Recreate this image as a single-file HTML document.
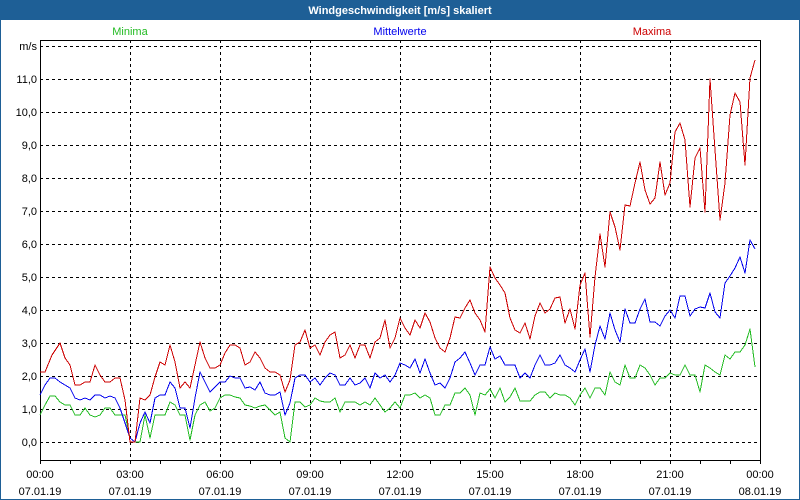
<!DOCTYPE html>
<html><head><meta charset="utf-8"><style>
html,body{margin:0;padding:0;background:#fff;width:800px;height:500px;overflow:hidden}
svg{display:block}
text{font-family:"Liberation Sans","DejaVu Sans",sans-serif;font-size:11px}
</style></head><body>
<svg width="800" height="500" viewBox="0 0 800 500" xmlns="http://www.w3.org/2000/svg">
<rect x="0" y="0" width="800" height="500" fill="#fff"/>
<rect x="0.5" y="0.5" width="799" height="499" fill="none" stroke="#1e5f96" stroke-width="1"/>
<rect x="0" y="0" width="800" height="20" fill="#1e5f96"/>
<text x="400" y="14" fill="#fff" text-anchor="middle" font-weight="bold">Windgeschwindigkeit [m/s] skaliert</text>
<text x="130" y="35" fill="#22bb22" text-anchor="middle">Minima</text>
<text x="400" y="35" fill="#0000ee" text-anchor="middle">Mittelwerte</text>
<text x="652" y="35" fill="#cc0000" text-anchor="middle">Maxima</text>
<g stroke="#000" stroke-width="1" stroke-dasharray="3,3" fill="none">
<path d="M40 46.5H760M40 79.5H760M40 112.5H760M40 145.5H760M40 178.5H760M40 211.5H760M40 244.5H760M40 277.5H760M40 310.5H760M40 343.5H760M40 376.5H760M40 409.5H760M40 442.5H760"/>
<path d="M130.5 40V461M220.5 40V461M310.5 40V461M400.5 40V461M490.5 40V461M580.5 40V461M670.5 40V461"/>
</g>
<rect x="40.5" y="40.5" width="720" height="420" fill="none" stroke="#000"/>
<g stroke="#000"><path d="M70.5 461v3M100.5 461v3M130.5 461v3M160.5 461v3M190.5 461v3M220.5 461v3M250.5 461v3M280.5 461v3M310.5 461v3M340.5 461v3M370.5 461v3M400.5 461v3M430.5 461v3M460.5 461v3M490.5 461v3M520.5 461v3M550.5 461v3M580.5 461v3M610.5 461v3M640.5 461v3M670.5 461v3M700.5 461v3M730.5 461v3M760.5 461v3M40.5 461v3"/></g>
<g fill="#000" text-anchor="end">
<text x="37" y="50">m/s</text><text x="37" y="83">11,0</text><text x="37" y="116">10,0</text><text x="37" y="149">9,0</text><text x="37" y="182">8,0</text><text x="37" y="215">7,0</text><text x="37" y="248">6,0</text><text x="37" y="281">5,0</text><text x="37" y="314">4,0</text><text x="37" y="347">3,0</text><text x="37" y="380">2,0</text><text x="37" y="413">1,0</text><text x="37" y="446">0,0</text>
</g>
<g fill="#000" text-anchor="middle">
<text x="40" y="478">00:00</text><text x="40" y="495">07.01.19</text>
<text x="130" y="478">03:00</text><text x="130" y="495">07.01.19</text>
<text x="220" y="478">06:00</text><text x="220" y="495">07.01.19</text>
<text x="310" y="478">09:00</text><text x="310" y="495">07.01.19</text>
<text x="400" y="478">12:00</text><text x="400" y="495">07.01.19</text>
<text x="490" y="478">15:00</text><text x="490" y="495">07.01.19</text>
<text x="580" y="478">18:00</text><text x="580" y="495">07.01.19</text>
<text x="670" y="478">21:00</text><text x="670" y="495">07.01.19</text>
<text x="760" y="478">00:00</text><text x="760" y="495">08.01.19</text>
</g>
<g fill="none" stroke-width="1" stroke-linejoin="round" shape-rendering="crispEdges">
<polyline stroke="#22bb22" points="40,415 45,405 50,396 55,396 60,402 65,405 70,405 75,415 80,415 85,408 90,415 95,417 100,415 105,408 110,408 115,415 120,415 125,415 130,438 135,442 140,442 145,415 150,438 155,415 160,415 165,415 170,402 175,405 180,415 185,415 190,440 195,415 200,405 205,402 210,411 215,408 220,398 225,395 230,395 235,397 240,398 245,405 250,406 255,408 260,406 265,405 270,410 275,415 280,412 285,438 290,442 295,402 300,402 305,407 310,405 315,398 320,401 325,402 330,402 335,398 340,412 345,402 350,402 355,402 360,405 365,402 370,405 375,398 380,405 385,412 390,408 395,402 400,408 405,395 410,395 415,393 420,398 425,395 430,398 435,415 440,415 445,405 450,405 455,393 460,393 465,388 470,395 475,415 480,393 485,395 490,389 495,398 500,388 505,402 510,397 515,388 520,401 525,401 530,401 535,395 540,392 545,392 550,398 555,393 560,395 565,395 570,398 575,405 580,395 585,388 590,398 595,388 600,388 605,395 610,372 615,382 620,385 625,365 630,378 635,378 640,365 645,368 650,375 655,385 660,378 665,378 670,373 675,375 680,375 685,365 690,375 695,375 700,392 705,365 710,368 715,372 720,375 725,355 730,359 735,352 740,352 745,345 750,329 755,367"/>
<polyline stroke="#0000ee" points="40,395 45,385 50,378 55,378 60,382 65,385 70,388 75,398 80,400 85,398 90,400 95,395 100,395 105,398 110,396 115,398 120,408 125,423 130,438 135,442 140,423 145,412 150,423 155,398 160,395 165,395 170,382 175,388 180,408 185,408 190,428 195,398 200,372 205,382 210,392 215,387 220,382 225,382 230,376 235,378 240,378 245,388 250,387 255,390 260,382 265,393 270,395 275,395 280,392 285,415 290,403 295,378 300,375 305,375 310,382 315,378 320,385 325,378 330,373 335,375 340,385 345,385 350,378 355,385 360,383 365,378 370,388 375,373 380,378 385,375 390,382 395,375 400,363 405,365 410,368 415,359 420,373 425,359 430,373 435,385 440,383 445,388 450,378 455,362 460,358 465,352 470,363 475,375 480,365 485,365 490,347 495,359 500,356 505,365 510,365 515,365 520,378 525,373 530,378 535,365 540,355 545,365 550,365 555,363 560,355 565,365 570,368 575,372 580,360 585,349 590,372 595,345 600,326 605,339 610,313 615,330 620,342 625,309 630,323 635,323 640,309 645,299 650,322 655,322 660,326 665,316 670,310 675,318 680,296 685,296 690,316 695,309 700,307 705,308 710,293 715,312 720,318 725,283 730,276 735,268 740,257 745,273 750,240 755,249"/>
<polyline stroke="#cc0000" points="40,372 45,372 52,355 60,343 65,358 70,365 75,385 80,385 85,382 90,382 95,365 100,375 105,382 110,382 115,378 120,378 125,400 130,442 135,442 140,398 145,400 150,395 155,377 160,362 165,365 170,345 175,362 180,388 185,382 190,388 195,365 200,342 205,358 210,368 215,368 220,365 225,353 230,345 235,345 240,348 245,365 250,362 255,352 260,358 265,368 270,372 275,372 280,375 285,392 290,380 295,345 300,342 305,330 310,348 315,345 320,355 325,342 330,335 335,332 340,358 345,355 350,345 355,358 360,345 365,345 370,358 375,342 380,338 385,320 390,348 395,338 400,318 405,328 410,335 415,320 420,328 425,313 430,322 435,338 440,348 445,352 450,338 455,317 460,318 465,308 470,300 475,313 480,320 485,332 490,267 495,278 500,285 505,293 510,318 515,330 520,333 525,323 530,339 535,316 540,303 545,313 550,309 555,298 560,297 565,323 570,309 575,329 580,285 585,273 590,337 595,277 600,234 605,267 610,212 615,227 620,250 625,205 630,206 635,183 640,162 645,190 650,204 655,198 660,162 665,195 670,183 675,132 680,123 685,140 690,207 695,158 700,148 705,212 710,79 715,150 720,220 725,183 730,115 735,93 740,102 745,165 750,78 755,60"/>
</g>
</svg>
</body></html>
